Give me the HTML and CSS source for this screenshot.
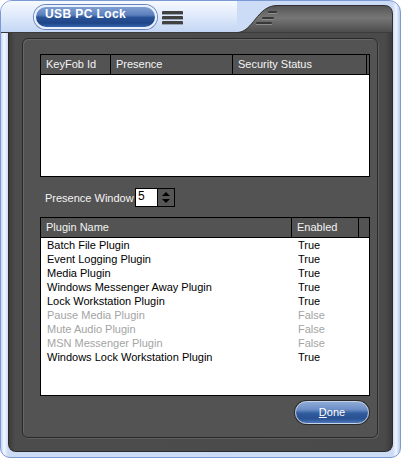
FILE: index.html
```html
<html>
    <head>
        <meta charset="UTF-8">
        <title>USB PC Lock</title>
        <link rel="stylesheet" href="styles.css">
    </head>
    <body>
        <div class="window">
            <div class="titlebar">
                <div class="title-left">
                    <div class="title-pill">USB PC Lock</div>
                    <div class="menu"><span></span><span></span><span></span></div>
                </div>
                <svg class="tab" width="156" height="28" viewBox="0 0 156 28">
                    <defs>
                        <linearGradient id="tabfill" x1="0" y1="0" x2="0" y2="1">
                            <stop offset="0" stop-color="#565656"/>
                            <stop offset="0.45" stop-color="#767676"/>
                            <stop offset="1" stop-color="#4a4a4a"/>
                        </linearGradient>
                    </defs>
                    <path d="M0,27.5 C16,27.5 20,0.5 40,0.5 L147,0.5 Q155.5,0.5 155.5,9 L155.5,28 L0,28 Z" fill="url(#tabfill)" stroke="#2f2f2f"/>
                    <rect x="31" y="6" width="9" height="2" rx="1" fill="#383838"/>
                    <rect x="31" y="8" width="9" height="1" fill="#8c8c8c"/>
                    <rect x="25" y="12" width="12" height="2" rx="1" fill="#383838"/>
                    <rect x="25" y="14" width="12" height="1" fill="#8c8c8c"/>
                    <rect x="19" y="17" width="16" height="2" rx="1" fill="#383838"/>
                    <rect x="19" y="19" width="16" height="1" fill="#8c8c8c"/>
                </svg>
            </div>
            <div class="body">
                <div class="panel">
                    <div class="grid keyfobs">
                        <div class="head">
                            <div class="cell c-id">KeyFob Id</div>
                            <div class="cell c-pres">Presence</div>
                            <div class="cell c-sec">Security Status</div>
                            <div class="fill"></div>
                        </div>
                    </div>

                    <div class="presence">
                        <span class="label">Presence Window</span>
                        <div class="num">5</div>
                        <div class="spin">
                            <div class="up"></div>
                            <div class="down"></div>
                        </div>
                    </div>

                    <div class="grid plugins">
                        <div class="head">
                            <div class="cell c-name">Plugin Name</div>
                            <div class="cell c-en">Enabled</div>
                            <div class="fill"></div>
                        </div>
                        <div class="row"><span class="c-name">Batch File Plugin</span><span class="c-en">True</span></div>
                        <div class="row"><span class="c-name">Event Logging Plugin</span><span class="c-en">True</span></div>
                        <div class="row"><span class="c-name">Media Plugin</span><span class="c-en">True</span></div>
                        <div class="row"><span class="c-name">Windows Messenger Away Plugin</span><span class="c-en">True</span></div>
                        <div class="row"><span class="c-name">Lock Workstation Plugin</span><span class="c-en">True</span></div>
                        <div class="row off"><span class="c-name">Pause Media Plugin</span><span class="c-en">False</span></div>
                        <div class="row off"><span class="c-name">Mute Audio Plugin</span><span class="c-en">False</span></div>
                        <div class="row off"><span class="c-name">MSN Messenger Plugin</span><span class="c-en">False</span></div>
                        <div class="row"><span class="c-name">Windows Lock Workstation Plugin</span><span class="c-en">True</span></div>
                    </div>

                    <div class="actions">
                        <button class="done"><u>D</u>one</button>
                    </div>
                </div>
            </div>
        </div>
    </body>
</html>
```
FILE: styles.css
```css
body {
    margin: 0;
    background: #fff;
    font-family: "Liberation Sans", Arial, sans-serif;
    font-size: 11px;
}
.window {
    width: 401px;
    height: 458px;
    box-sizing: border-box;
    border: 1px solid #7b99d4;
    border-radius: 12px 12px 10px 10px;
    background: linear-gradient(90deg, #c2d4f3 0px, #f4f8ff 3px, #cddcf6 7px, #cddcf6 392px, #f0f5ff 395px, #b8ccef 399px);
    padding: 0 7px 5px 7px;
    display: flex;
    flex-direction: column;
}
.titlebar {
    height: 32px;
    display: flex;
    align-items: flex-start;
}
.title-left {
    flex: 1;
    height: 31px;
    display: flex;
    align-items: flex-start;
    border-bottom: 1px solid #3a3a3a;
    background: linear-gradient(#f6f9ff, #e4edfc 12px, #c4d6f4 31px);
    margin-left: -7px;
    padding-left: 7px;
    border-radius: 11px 0 0 0;
}
.title-pill {
    margin: 4px 0 0 26px;
    width: 123px;
    height: 24px;
    box-sizing: border-box;
    border: 2px solid #eaf0fc;
    border-radius: 12px;
    box-shadow: 0 0 0 1px #6a87bd;
    background: linear-gradient(#7f9fd2, #5d80bd 40%, #2a5297 52%, #1d4587 80%, #3564ad);
    color: #fff;
    font-weight: bold;
    font-size: 12px;
    letter-spacing: 0.4px;
    line-height: 15px;
    padding-left: 9px;
}
.menu {
    margin: 10px 0 0 5px;
    width: 21px;
    display: flex;
    flex-direction: column;
    gap: 1px;
}
.menu span {
    height: 3px;
    background: #414141;
    border-radius: 1px;
    border-bottom: 1px solid #9aa4b4;
}
.tab {
    margin-top: 4px;
    display: block;
}
.body {
    flex: 1;
    background: linear-gradient(90deg, #3c3c3c, #4c4c4c 6px, #4a4a4a 376px, #3a3a3a);
    border: 1px solid #2c2c2c;
    border-top: none;
    border-radius: 0 0 8px 8px;
    padding: 5px 14px 13px 13px;
    display: flex;
}
.panel {
    flex: 1;
    background: #535353;
    border: 1px solid #2a2a2a;
    border-radius: 6px;
    box-shadow: inset 1px 1px 0 #666, 1px 1px 0 #5e5e5e;
    padding: 15px 7px 0 17px;
}
.grid {
    border: 1px solid #000;
    background: #fff;
}
.keyfobs {
    height: 121px;
}
.plugins {
    height: 177px;
    margin-top: 10px;
}
.head {
    display: flex;
    height: 19px;
    background: #535353;
    border-bottom: 1px solid #000;
    color: #f4f4f4;
    line-height: 19px;
}
.head .cell {
    box-sizing: border-box;
    border-right: 1px solid #000;
    padding-left: 5px;
    white-space: nowrap;
}
.head .fill {
    flex: 1;
}
.c-id { width: 70px; }
.c-pres { width: 122px; }
.c-sec { width: 134px; }
.c-name { width: 251px; }
.c-en { width: 67px; }
.row {
    display: flex;
    height: 14px;
    line-height: 14px;
    color: #000;
}
.row span {
    box-sizing: border-box;
    padding-left: 6px;
    white-space: nowrap;
}
.row.off {
    color: #a4a4a4;
}
.presence {
    display: flex;
    align-items: center;
    height: 19px;
    margin-top: 11px;
    color: #f4f4f4;
}
.presence .label {
    margin-left: 5px;
    width: 90px;
}
.num {
    width: 23px;
    height: 19px;
    box-sizing: border-box;
    border: 1px solid #000;
    background: #fff;
    color: #000;
    font-size: 12px;
    line-height: 15px;
    padding-left: 2px;
}
.spin {
    width: 17px;
    height: 19px;
    box-sizing: border-box;
    border: 1px solid #000;
    border-left: none;
    background: #565656;
    display: flex;
    flex-direction: column;
    align-items: center;
    justify-content: center;
    gap: 3px;
}
.up {
    width: 0;
    height: 0;
    border-left: 4px solid transparent;
    border-right: 4px solid transparent;
    border-bottom: 4px solid #000;
}
.down {
    width: 0;
    height: 0;
    border-left: 4px solid transparent;
    border-right: 4px solid transparent;
    border-top: 4px solid #000;
}
.actions {
    display: flex;
    justify-content: flex-end;
    margin-top: 5px;
    padding-right: 1px;
}
.done {
    width: 74px;
    height: 23px;
    box-sizing: border-box;
    border: 1px solid #c4d2ea;
    border-radius: 12px;
    box-shadow: 0 0 0 1px #2a2a2a;
    background: linear-gradient(#8eaad6, #6d8fc6 35%, #2f5a9c 55%, #2a5294 80%, #4b77b8);
    color: #fff;
    font-family: "Liberation Sans", Arial, sans-serif;
    font-size: 11px;
    padding: 0;
    line-height: 19px;
}
```
